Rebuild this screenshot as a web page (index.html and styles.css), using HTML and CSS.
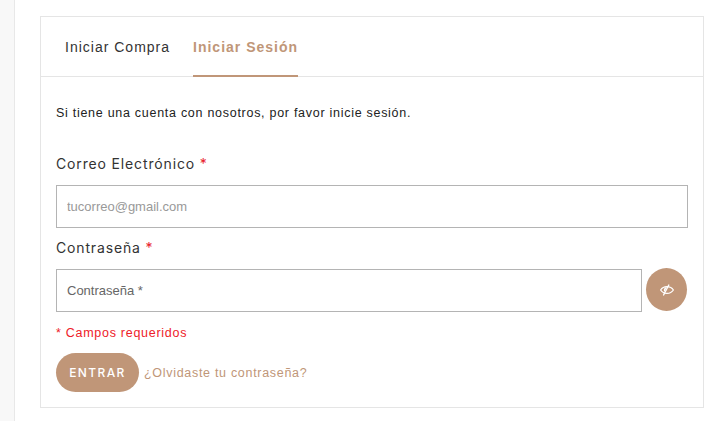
FILE: index.html
```html
<!DOCTYPE html>
<html lang="es">
<head>
    <meta charset="UTF-8">
    <meta name="viewport" content="width=device-width, initial-scale=1.0">
    <title>Iniciar Sesión</title>
    <link rel="stylesheet" href="styles.css">
</head>
<body>
    <div class="side"></div>

    <main class="content">
        <div class="card">
            <div class="tabs">
                <a class="tab" href="#">Iniciar Compra</a>
                <a class="tab active" href="#">Iniciar Sesión</a>
            </div>

            <form class="login">
                <p class="intro">Si tiene una cuenta con nosotros, por favor inicie sesión.</p>

                <label class="field-label first" for="email">Correo Electrónico <span class="req">*</span></label>
                <input class="field" type="email" id="email" placeholder="tucorreo@gmail.com">

                <label class="field-label second" for="password">Contraseña <span class="req">*</span></label>
                <div class="password-row">
                    <input class="field pass" type="password" id="password" placeholder="Contraseña *">
                    <button class="eye-button" type="button" aria-label="Mostrar contraseña">
                        <svg width="14" height="12" viewBox="0 0 14 12">
                            <path d="M0.6 6C2 3.800 4.300 2.600 7 2.600s5 1.200 6.400 3.400C12 8.200 9.700 9.400 7 9.400S2 8.200 0.600 6z" fill="none" stroke="#fff" stroke-width="1.200"/>
                            <path d="M3.800 6c0-1.600 1.300-2.800 3-3L4.600 7.800C4.100 7.400 3.800 6.700 3.800 6z" fill="#fff"/>
                            <path d="M8.800 1L3.600 11" stroke="#fff" stroke-width="1.400" stroke-linecap="round"/>
                        </svg>
                    </button>
                </div>

                <p class="required-note">* Campos requeridos</p>

                <div class="actions">
                    <button class="submit" type="button">ENTRAR</button>
                    <a class="forgot" href="#">¿Olvidaste tu contraseña?</a>
                </div>
            </form>
        </div>
    </main>
</body>
</html>
```

FILE: styles.css
```css
/* base */
* {
    box-sizing: border-box;
}

body {
    margin: 0;
    height: 421px;
    overflow: hidden;
    display: flex;
    background-color: #fff;
    font-family: "Liberation Sans", Arial, sans-serif;
    color: #222;
}

.side {
    width: 15px;
    background-color: #f8f8f8;
    border-right: 1px solid #e8e8e8;
}

.content {
    flex: 1;
    padding: 16px 20px 0 25px;
}

/* card */
.card {
    height: 392px;
    border: 1px solid #e5e5e5;
}

.tabs {
    display: flex;
    gap: 23px;
    height: 60px;
    padding-left: 24px;
    border-bottom: 1px solid #e5e5e5;
}

.tab {
    height: 60px;
    line-height: 60px;
    font-size: 14px;
    letter-spacing: 1px;
    color: #333;
    text-decoration: none;
}

.tab.active {
    font-weight: bold;
    color: #c09678;
    border-bottom: 2px solid #c09678;
}

/* form */
.login {
    padding: 0 15px;
}

.intro {
    margin: 28px 0 0;
    font-size: 12.5px;
    line-height: 16px;
    letter-spacing: 0.72px;
    color: #222;
}

.field-label {
    display: block;
    height: 20px;
    line-height: 20px;
    font-family: Inter, sans-serif;
    font-size: 14px;
    letter-spacing: 0.85px;
    color: #333;
}

.field-label.first {
    margin-top: 33px;
}

.field-label.second {
    margin-top: 10px;
}

.req {
    color: #e8222c;
}

.field {
    display: block;
    width: 100%;
    height: 43px;
    margin-top: 11px;
    padding: 0 10px;
    border: 1px solid #b4b4b4;
    border-radius: 0;
    outline: none;
    font-family: "Liberation Sans", Arial, sans-serif;
    font-size: 13px;
}

.field::placeholder {
    color: #999;
}

.field.pass::placeholder {
    color: #666;
}

.password-row {
    display: flex;
    align-items: flex-start;
    gap: 4px;
    margin-top: 11px;
    padding-right: 1px;
}

.password-row .field {
    flex: 1;
    margin-top: 0;
}

.eye-button {
    display: flex;
    align-items: center;
    justify-content: center;
    width: 41px;
    height: 43px;
    margin-top: -1px;
    padding: 0;
    border: none;
    border-radius: 50%;
    background-color: #c09678;
}

.required-note {
    margin: 13px 0 0;
    font-size: 12.5px;
    line-height: 16px;
    letter-spacing: 0.72px;
    color: #ee2028;
}

.actions {
    display: flex;
    align-items: center;
    gap: 5px;
    margin-top: 12px;
}

.submit {
    width: 83px;
    height: 39px;
    padding: 0;
    border: none;
    border-radius: 20px;
    background-color: #c09678;
    color: #fff;
    font-family: Inter, sans-serif;
    font-size: 12px;
    font-weight: 500;
    letter-spacing: 1.4px;
}

.forgot {
    font-size: 12.5px;
    letter-spacing: 0.7px;
    color: #c09678;
    text-decoration: none;
}
```
